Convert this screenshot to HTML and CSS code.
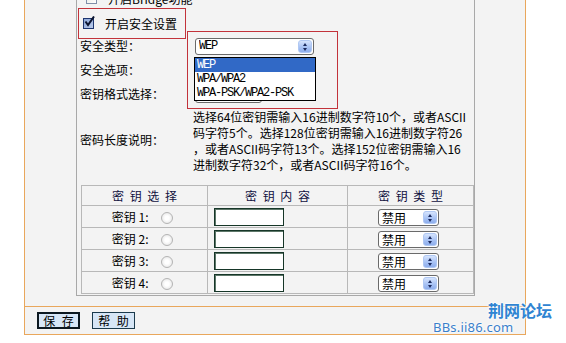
FILE: index.html
```html
<!DOCTYPE html>
<html lang="zh-CN">
<head>
<meta charset="utf-8">
<title>无线安全设置</title>
<link rel="stylesheet" href="styles.css">
</head>
<body>
<div class="frame">
  <div class="main">
    <div class="box">
      <div class="row row-bridge"><span class="cb"></span><span class="cb-label">开启Bridge功能</span></div>
      <div class="row row-secure"><span class="cb cb-on"><svg width="13" height="13" viewBox="0 0 13 13"><path d="M2.5 5.5 L5 9 L11 0.5" fill="none" stroke="#0b1430" stroke-width="2"/></svg></span><span class="cb-label">开启安全设置</span></div>
      <div class="form">
        <div class="label">安全类型：</div>
        <div class="ctl ctl-type">
          <span class="select select-type"><span class="select-val mono">WEP</span><span class="select-btn"><svg width="12" height="13" viewBox="0 0 12 13"><polygon points="4,6 6,3 8,6" fill="#1b2a5e"/><polygon points="4,8 8,8 6,11" fill="#1b2a5e"/></svg></span></span>
          <ul class="dropdown mono">
            <li class="active">WEP</li>
            <li>WPA/WPA2</li>
            <li>WPA-PSK/WPA2-PSK</li>
          </ul>
        </div>
        <div class="label">安全选项：</div>
        <div class="ctl"><span class="select select-short"><span class="select-val"></span><span class="select-btn"></span></span></div>
        <div class="label">密钥格式选择：</div>
        <div class="ctl"><span class="select select-short"><span class="select-val"></span><span class="select-btn"></span></span></div>
        <div class="label label-desc">密码长度说明：</div>
        <div class="desc">选择64位密钥需输入16进制数字符10个，或者ASCII<br>码字符5个。选择128位密钥需输入16进制数字符26<br>，或者ASCII码字符13个。选择152位密钥需输入16<br>进制数字符32个，或者ASCII码字符16个。</div>
      </div>
      <table class="keys">
        <colgroup><col class="c1"><col class="c2"><col class="c3"></colgroup>
        <thead>
          <tr><th>密 钥 选 择</th><th>密 钥 内 容</th><th>密 钥 类 型</th></tr>
        </thead>
        <tbody>
          <tr><td class="k-sel">密钥 1: <span class="radio"></span></td><td class="k-val"><span class="input"></span></td><td class="k-type"><span class="select select-key"><span class="select-val">禁用</span><span class="select-btn"><svg width="12" height="13" viewBox="0 0 12 13"><polygon points="4,6 6,3 8,6" fill="#1b2a5e"/><polygon points="4,8 8,8 6,11" fill="#1b2a5e"/></svg></span></span></td></tr>
          <tr><td class="k-sel">密钥 2: <span class="radio"></span></td><td class="k-val"><span class="input"></span></td><td class="k-type"><span class="select select-key"><span class="select-val">禁用</span><span class="select-btn"><svg width="12" height="13" viewBox="0 0 12 13"><polygon points="4,6 6,3 8,6" fill="#1b2a5e"/><polygon points="4,8 8,8 6,11" fill="#1b2a5e"/></svg></span></span></td></tr>
          <tr><td class="k-sel">密钥 3: <span class="radio"></span></td><td class="k-val"><span class="input"></span></td><td class="k-type"><span class="select select-key"><span class="select-val">禁用</span><span class="select-btn"><svg width="12" height="13" viewBox="0 0 12 13"><polygon points="4,6 6,3 8,6" fill="#1b2a5e"/><polygon points="4,8 8,8 6,11" fill="#1b2a5e"/></svg></span></span></td></tr>
          <tr><td class="k-sel">密钥 4: <span class="radio"></span></td><td class="k-val"><span class="input"></span></td><td class="k-type"><span class="select select-key"><span class="select-val">禁用</span><span class="select-btn"><svg width="12" height="13" viewBox="0 0 12 13"><polygon points="4,6 6,3 8,6" fill="#1b2a5e"/><polygon points="4,8 8,8 6,11" fill="#1b2a5e"/></svg></span></span></td></tr>
        </tbody>
      </table>
      <div class="note note-secure"></div>
      <div class="note note-type"></div>
    </div>
  </div>
  <div class="footer">
    <span class="btn btn-default">保 存</span>
    <span class="btn">帮 助</span>
  </div>
</div>
<div class="watermark">
  <div class="wm-name">荆网论坛</div>
  <div class="wm-url">BBs.ii86.com</div>
</div>
</body>
</html>
```

FILE: styles.css
```css
html, body {
  margin: 0;
  padding: 0;
  background: #ffffff;
}
body {
  font-family: "Noto Sans CJK SC", "Noto Sans", sans-serif;
  font-size: 12px;
  color: #000;
  position: relative;
  overflow: hidden;
  height: 343px;
}
.mono {
  font-family: "Liberation Mono", monospace;
  letter-spacing: -1.2px;
}
.frame {
  margin: -14px 0 0 24px;
  width: 502px;
  box-sizing: border-box;
  border-left: 1px solid #e9a75c;
  border-right: 1px solid #e9a75c;
  border-bottom: 1px solid #e9a75c;
  background: #f3f3f3;
}
.main {
  padding: 0 0 10px 51px;
}
.box {
  position: relative;
  width: 399px;
  box-sizing: border-box;
  border: 1px solid #a8a8a8;
  border-top: none;
  padding-bottom: 1px;
}
.row {
  height: 24px;
  display: flex;
  align-items: center;
}
.row-bridge {
  padding-left: 9px;
}
.row-secure {
  padding-left: 6px;
  padding-top: 3px;
  box-sizing: border-box;
}
.cb {
  position: relative;
  width: 11px;
  height: 11px;
  box-sizing: border-box;
  border: 1px solid #7f8ea8;
  background: linear-gradient(135deg, #e6e6e0, #ffffff);
  margin-right: 11px;
}
.cb-on {
  border-color: #1d3670;
  background: linear-gradient(135deg, #8ea8d8, #b9cbec);
}
.cb-on svg {
  position: absolute;
  left: -1px;
  top: -3px;
}
.form {
  display: grid;
  grid-template-columns: 115px 1fr;
  grid-template-rows: 24px 24px 24px 68px;
  padding-left: 3px;
}
.label {
  display: flex;
  align-items: center;
  line-height: 16px;
}
.ctl {
  display: flex;
  align-items: center;
}
.ctl-type {
  position: relative;
}
.select {
  display: inline-flex;
  align-items: center;
  height: 17px;
  box-sizing: border-box;
  border: 1px solid #6a6a6a;
  border-radius: 3px;
  background: #fff;
  padding: 0 1px 0 3px;
  line-height: 15px;
}
.select-val {
  flex: 1;
  white-space: nowrap;
  overflow: hidden;
}
.select-btn {
  display: block;
  width: 14px;
  height: 13px;
  box-sizing: border-box;
  border: 1px solid #b0c8f3;
  border-radius: 3px;
  background: linear-gradient(#d6e4fd, #a9c3f4 55%, #8eaeed);
}
.select-btn svg {
  display: block;
  margin: -1px 0 0 0;
}
.select-type {
  width: 119px;
}
.select-short {
  width: 67px;
}
.select-key {
  width: 61px;
}
.dropdown {
  position: absolute;
  left: -1px;
  top: 23px;
  width: 122px;
  box-sizing: border-box;
  margin: 0;
  padding: 0;
  list-style: none;
  border: 1px solid #000;
  background: #fff;
  z-index: 2;
}
.dropdown li {
  height: 14px;
  line-height: 14px;
  padding-left: 2px;
  white-space: nowrap;
}
.dropdown li.active {
  background: #3169c6;
  color: #fff;
}
.desc {
  height: 68px;
  box-sizing: border-box;
  padding-top: 3px;
  margin-left: -2px;
  line-height: 16px;
  white-space: nowrap;
}
.keys {
  margin: 11px 0 0 4px;
  width: 392px;
  border-collapse: collapse;
  table-layout: fixed;
}
.keys .c1 { width: 126px; }
.keys .c2 { width: 140px; }
.keys .c3 { width: 126px; }
.keys th,
.keys td {
  border: 1px solid #b8b8b8;
  padding: 0;
  font-weight: normal;
}
.keys th {
  height: 19px;
  text-align: center;
  color: #101040;
  word-spacing: 3px;
}
.keys td {
  height: 21px;
}
.k-sel {
  text-align: center;
  padding-right: 4px !important;
  white-space: nowrap;
}
.radio {
  display: inline-block;
  vertical-align: middle;
  width: 12px;
  height: 12px;
  box-sizing: border-box;
  border-radius: 50%;
  border: 1px solid #b4b4b4;
  background: radial-gradient(circle at 50% 50%, #ffffff 0 2px, #ececec 5px);
  margin: -2px 0 0 10px;
}
.k-val {
  padding-left: 6px !important;
}
.input {
  display: block;
  width: 70px;
  height: 18px;
  box-sizing: border-box;
  border: 1px solid #163628;
  box-shadow: inset 1px 1px 0 #5d7769;
  background: #fff;
}
.k-type {
  text-align: center;
  padding-right: 4px !important;
}
.k-type .select {
  vertical-align: middle;
  text-align: left;
}
.note {
  position: absolute;
  box-sizing: border-box;
  border: 1px solid #c2323a;
  pointer-events: none;
}
.note-secure {
  left: 1px;
  top: 22px;
  width: 108px;
  height: 31px;
}
.note-type {
  left: 110px;
  top: 45px;
  width: 151px;
  height: 78px;
}
.footer {
  border-top: 1px solid #e9a75c;
  padding: 5px 0 5px 12px;
  display: flex;
  gap: 12px;
  height: 17px;
}
.btn {
  display: flex;
  align-items: center;
  justify-content: center;
  width: 43px;
  height: 17px;
  box-sizing: border-box;
  border: 1px solid #1b3a4c;
  background: #d7e6f6;
  word-spacing: 4px;
  line-height: 15px;
}
.btn-default {
  border: 2px solid #0c1820;
}
.watermark {
  position: absolute;
  left: 433px;
  top: 300px;
  color: #2f84d2;
}
.wm-name {
  padding-left: 55px;
  font-size: 16px;
  font-weight: bold;
  line-height: 20px;
  text-shadow: 0 0 2px #fff, 0 0 2px #fff, 0 0 3px #fff;
}
.wm-url {
  font-family: "Noto Sans", sans-serif;
  font-size: 13px;
  line-height: 14px;
  color: #3a7fca;
  letter-spacing: 0.2px;
  text-shadow: 0 0 2px #fff, 0 0 2px #fff, 0 0 3px #fff;
}
```
